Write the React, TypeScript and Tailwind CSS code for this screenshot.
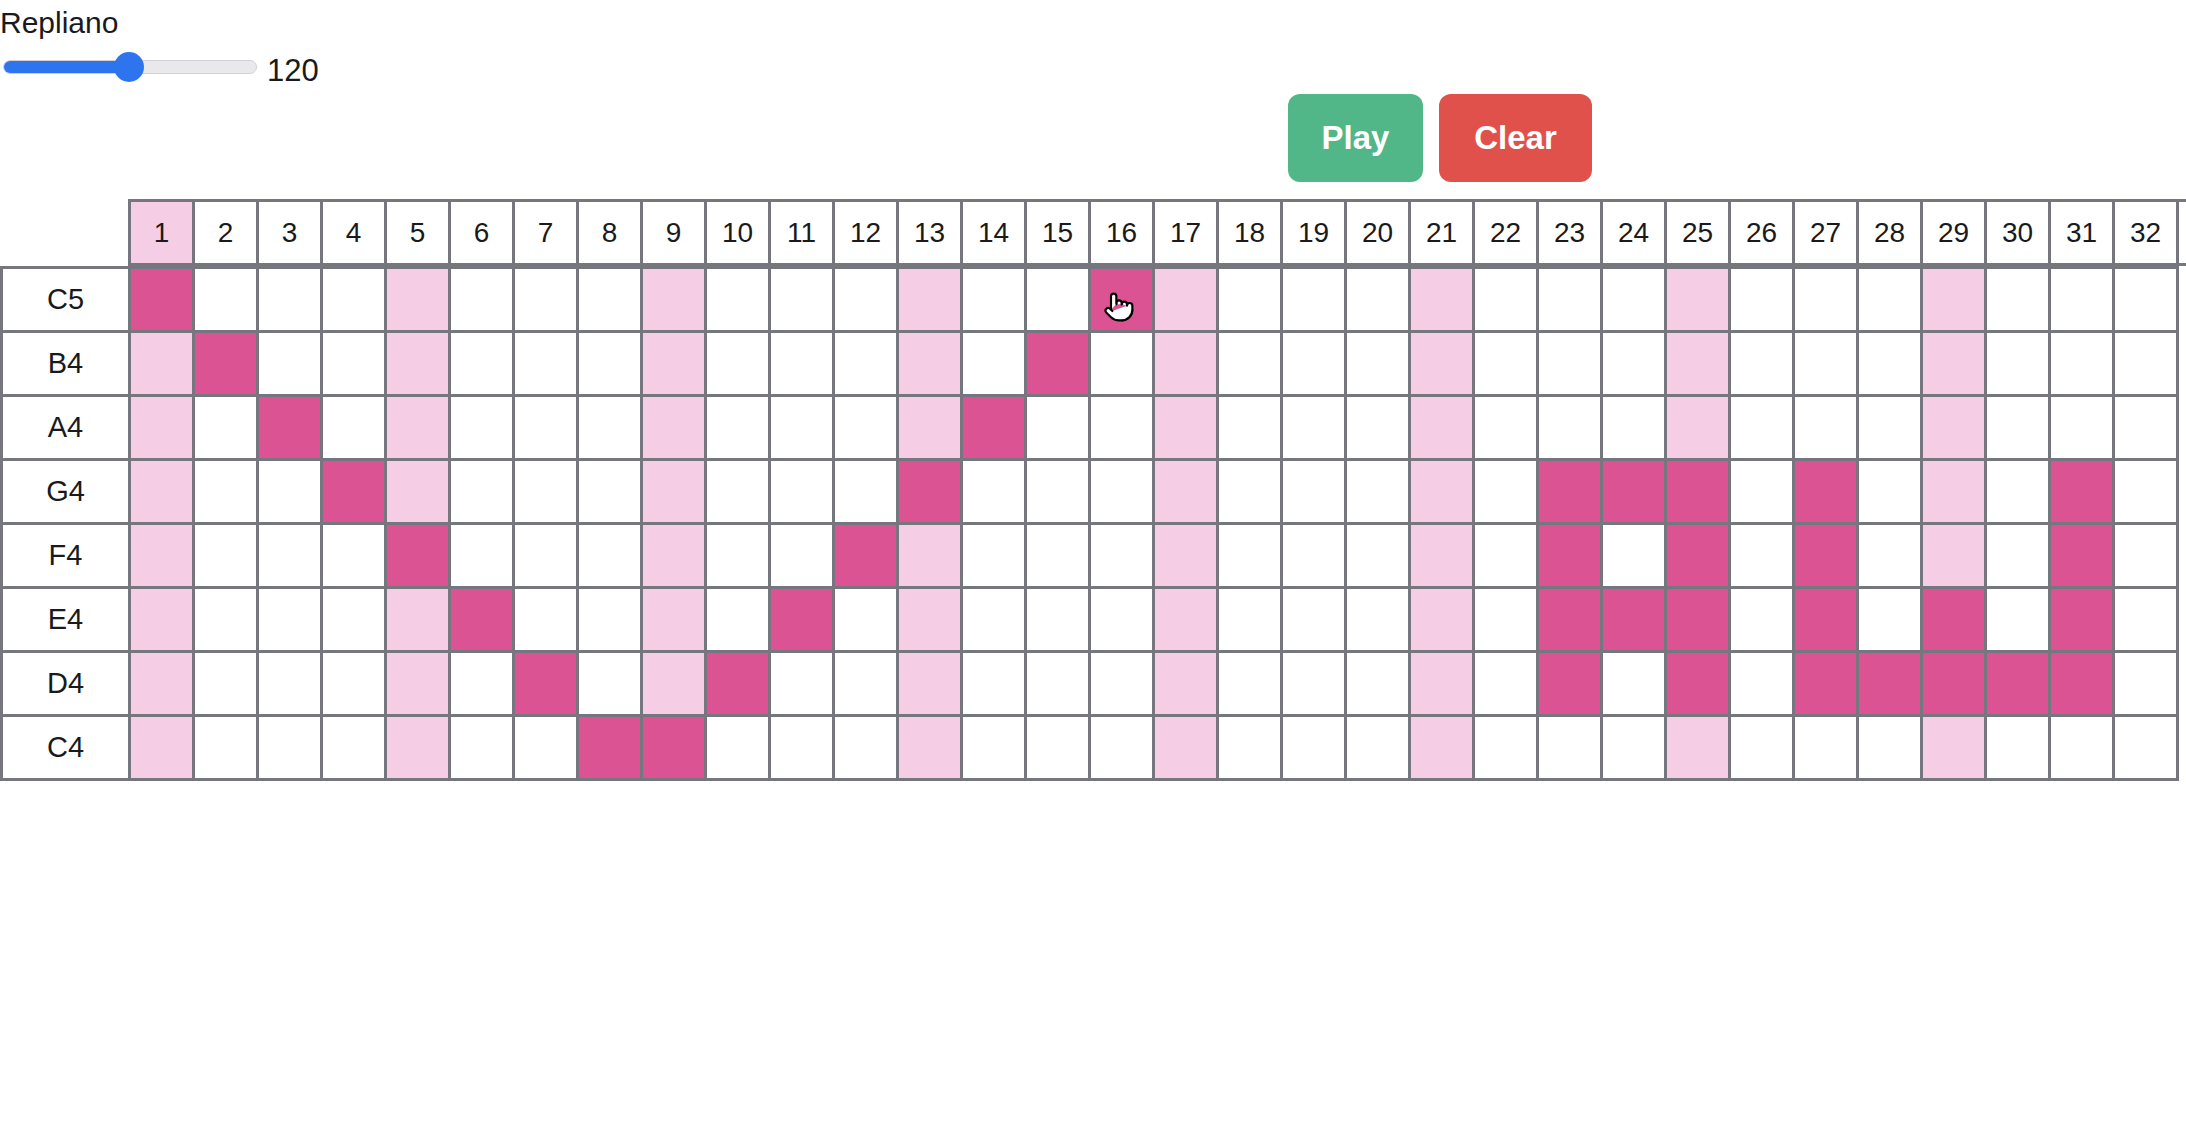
import { Pointer } from "lucide-react"

const notes = ["C5", "B4", "A4", "G4", "F4", "E4", "D4", "C4"]

// active steps per row (1-based column numbers)
const pattern: number[][] = [
  [1, 16],
  [2, 15],
  [3, 14],
  [4, 13, 23, 24, 25, 27, 31],
  [5, 12, 23, 25, 27, 31],
  [6, 11, 23, 24, 25, 27, 29, 31],
  [7, 10, 23, 25, 27, 28, 29, 30, 31],
  [8, 9],
]

const steps = Array.from({ length: 32 }, (_, i) => i + 1)

function cellColor(row: number, step: number) {
  if (pattern[row].includes(step)) return "bg-[#dc5394]"
  if ((step - 1) % 4 === 0) return "bg-[#f5cee6]"
  return "bg-white"
}

export default function App() {
  return (
    <div className="w-[2186px] h-[1122px] overflow-hidden bg-white text-[#1a1a1c] font-['Liberation_Sans',Arial,sans-serif]">

      {/* Title */}
      <div className="pt-[6px] text-[30px] leading-[34px]">Repliano</div>

      {/* Tempo slider */}
      <div className="flex items-center h-[54px]">
        <div className="relative ml-[3px] w-[254px] h-[14px] rounded-full bg-[#e9e9eb] border border-[#d2d2d6]">
          <div className="h-full w-[125px] rounded-full bg-[#2f74ef]" />
          <div className="absolute left-[110px] top-[-9px] w-[30px] h-[30px] rounded-full bg-[#2f74ef]" />
        </div>
        <span className="ml-[10px] mt-[6px] text-[31px] leading-none">120</span>
      </div>

      {/* Buttons */}
      <div className="flex gap-[16px] pl-[1288px]">
        <button className="w-[135px] h-[88px] rounded-[12px] bg-[#52b788] text-white font-bold text-[33px]">
          Play
        </button>
        <button className="w-[153px] h-[88px] rounded-[12px] bg-[#e0514b] text-white font-bold text-[33px]">
          Clear
        </button>
      </div>

      {/* Header row */}
      <div className="mt-[17px] ml-[128px] grid grid-cols-[repeat(33,61px)] auto-rows-[61px] gap-[3px] p-[3px] bg-[#76767e] w-max">
        {steps.map((s) => (
          <div
            key={s}
            className={`flex items-center justify-center text-[28px] ${s === 1 ? "bg-[#f5cee6]" : "bg-white"}`}
          >
            {s}
          </div>
        ))}
        <div className="bg-white" />
      </div>

      {/* Note grid */}
      <div className="grid grid-cols-[125px_repeat(32,61px)] auto-rows-[61px] gap-[3px] p-[3px] bg-[#76767e] w-max">
        {notes.map((note, r) => (
          <div key={note} className="contents">
            <div className="flex items-center justify-center bg-white text-[29px]">{note}</div>
            {steps.map((s) => (
              <div key={s} className={`relative ${cellColor(r, s)}`}>
                {r === 0 && s === 16 && (
                  <Pointer
                    size={32}
                    strokeWidth={1.6}
                    className="absolute left-[12px] top-[22px] fill-white text-black"
                  />
                )}
              </div>
            ))}
          </div>
        ))}
      </div>
    </div>
  )
}
